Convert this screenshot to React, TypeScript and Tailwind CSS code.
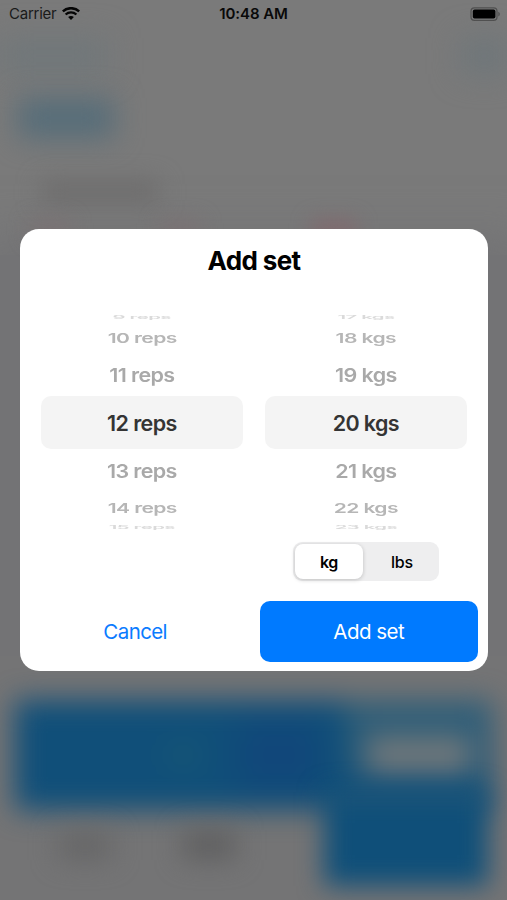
const rowStyles = [
  "h-[8px] text-[#dadada]",
  "h-[33px] text-[#b6b6b6]",
  "h-[42px] text-[#a9a9a9]",
  "h-[53px] rounded-[10px] bg-[#f4f4f4] text-[#343434]",
  "h-[43px] text-[#a9a9a9]",
  "h-[31px] text-[#b6b6b6]",
  "h-[7px] text-[#dadada]",
];

const textStyles = [
  "scale-x-[0.95] scale-y-[0.24]",
  "scale-x-[0.98] scale-y-[0.64]",
  "scale-y-[0.89]",
  "",
  "scale-y-[0.89]",
  "scale-x-[0.98] scale-y-[0.64]",
  "scale-x-[0.95] scale-y-[0.24]",
];

const reps = ["9 reps", "10 reps", "11 reps", "12 reps", "13 reps", "14 reps", "15 reps"];
const weights = ["17 kgs", "18 kgs", "19 kgs", "20 kgs", "21 kgs", "22 kgs", "23 kgs"];

function Wheel({ items }: { items: string[] }) {
  return (
    <div className="flex w-[202px] flex-col">
      {items.map((item, index) => (
        <div key={item} className={`flex items-center justify-center overflow-hidden ${rowStyles[index]}`}>
          <span
            className={`block shrink-0 text-[21.5px] leading-[30px] font-[560] tracking-[-0.62px] whitespace-nowrap ${textStyles[index]}`}
          >
            {item}
          </span>
        </div>
      ))}
    </div>
  );
}

function WifiIcon() {
  return (
    <svg width="18" height="14" viewBox="0 0 18 14" fill="none" stroke="#050505">
      <path d="M.8 4.4c4.6-4.3 11.8-4.3 16.4 0" strokeWidth="2.5" />
      <path d="M3.6 7.5c3.1-2.9 7.7-2.9 10.8 0" strokeWidth="2.3" />
      <path d="M6.1 10.1c1.6-1.6 4.2-1.6 5.8 0L9 13Z" fill="#050505" stroke="none" />
    </svg>
  );
}

function BatteryIcon() {
  return (
    <svg width="31" height="15" viewBox="0 0 31 15" fill="none">
      <rect x="1" y=".8" width="26" height="12.6" rx="3.4" stroke="#505050" strokeWidth="1.2" />
      <rect x="2.8" y="2.6" width="22.6" height="9" rx="1.8" fill="#000" />
      <path d="M28.3 4.8v4.6c2-.8 2-3.8 0-4.6Z" fill="#505050" />
    </svg>
  );
}

// Workout screen that sits dimmed and out of focus behind the dialog
function Backdrop() {
  return (
    <div className="absolute inset-0 flex flex-col bg-[#7a7a7a]">
      <div className="flex h-[92px] items-start justify-between pt-[38px] blur-[15px]">
        <div className="h-9 w-[108px] bg-[#70777a]" />
        <div className="h-9 w-[46px] bg-[#6e767a]" />
      </div>
      <div className="h-[86px] pt-[6px] pl-[18px] blur-[14px]">
        <div className="h-[40px] w-[96px] bg-[#566d79]" />
      </div>
      <div className="h-[37px] pt-1 pl-[42px] blur-[12px]">
        <div className="h-5 w-[116px] bg-[#6c6b6b]" />
      </div>
      <div className="flex h-[40px] gap-[90px] pt-[6px] pl-[30px] blur-[10px]">
        <div className="h-4 w-[40px] bg-[#7b7173]" />
        <div className="h-4 w-[40px] bg-[#7b7173]" />
        <div className="ml-[22px] h-4 w-[44px] bg-[#82676c]" />
      </div>
      <div className="flex-1 bg-[#737375] shadow-[0_0_40px_20px_#737375]" />
      <div className="flex h-[244px] flex-col bg-[#747475] pt-[44px]">
        <div className="px-[15px] blur-[14px]">
          <div className="flex h-[110px] items-center bg-[#104f79]">
            <div className="ml-[152px] h-6 w-[32px] bg-[#185775] blur-[6px]" />
            <div className="ml-[40px] h-[64px] w-[80px] bg-[#11477a] blur-[10px]" />
            <div className="ml-[26px] flex h-[110px] flex-1 items-center justify-center bg-linear-to-b from-[#315f78] via-[#285a78] to-[#105079]">
              <div className="h-[38px] w-[104px] bg-[#6f777a]" />
            </div>
          </div>
        </div>
        <div className="-mt-[8px] flex pt-[8px] pl-[58px] blur-[13px]">
          <div className="mt-[22px] h-[28px] w-[54px] bg-[#666667]" />
          <div className="mt-[20px] ml-[70px] h-[30px] w-[54px] bg-[#606061]" />
          <div className="-mt-[18px] ml-[88px] h-[94px] w-[164px] bg-[#0f4f79]" />
        </div>
      </div>
    </div>
  );
}

export default function App() {
  return (
    <div className="relative h-[900px] w-[507px] overflow-hidden font-['Inter','Liberation_Sans',sans-serif]">
      <Backdrop />

      <div className="relative flex h-full flex-col">
        <header className="grid h-[28px] grid-cols-3 items-center text-[15px] text-[#1a1a1a]">
          <div className="flex items-center gap-[6px] pl-[9px]">
            <span className="tracking-[-0.25px]">Carrier</span>
            <WifiIcon />
          </div>
          <span className="text-center font-[570] tracking-[-0.05px] text-[#090909]">10:48 AM</span>
          <div className="flex justify-end pr-[6px]">
            <BatteryIcon />
          </div>
        </header>

        <main className="mt-[201.4px] ml-[20.4px] flex h-[442px] w-[467.2px] flex-col rounded-[19px] bg-white">
          <h1 className="mt-[14.2px] text-center text-[26px] leading-[34px] font-bold tracking-[-0.6px] text-black">
            Add set
          </h1>

          <div className="mt-[35.5px] flex gap-[22px] pl-[20.5px]">
            <Wheel items={reps} />
            <Wheel items={weights} />
          </div>

          <div className="mt-[12px] ml-[272.5px] flex h-[39px] w-[146px] rounded-[9px] bg-[#eeeeef] p-[2px] text-[16px] text-black">
            <button className="w-[68px] rounded-[8px] bg-white font-[570] tracking-[-0.4px] shadow-[0_1px_4px_rgba(0,0,0,0.2)]">kg</button>
            <button className="flex-1 pl-[4px] font-medium tracking-[-0.2px]">lbs</button>
          </div>

          <div className="mt-[19.5px] flex h-[61px] pr-[10px] text-[20.5px]">
            <button className="w-[239.6px] pt-[2px] pr-[10px] tracking-[-0.6px] text-[#0a7bff]">Cancel</button>
            <button className="flex-1 rounded-[10px] bg-[#007aff] pt-[2px] tracking-[-0.5px] text-white">Add set</button>
          </div>
        </main>
      </div>
    </div>
  );
}
